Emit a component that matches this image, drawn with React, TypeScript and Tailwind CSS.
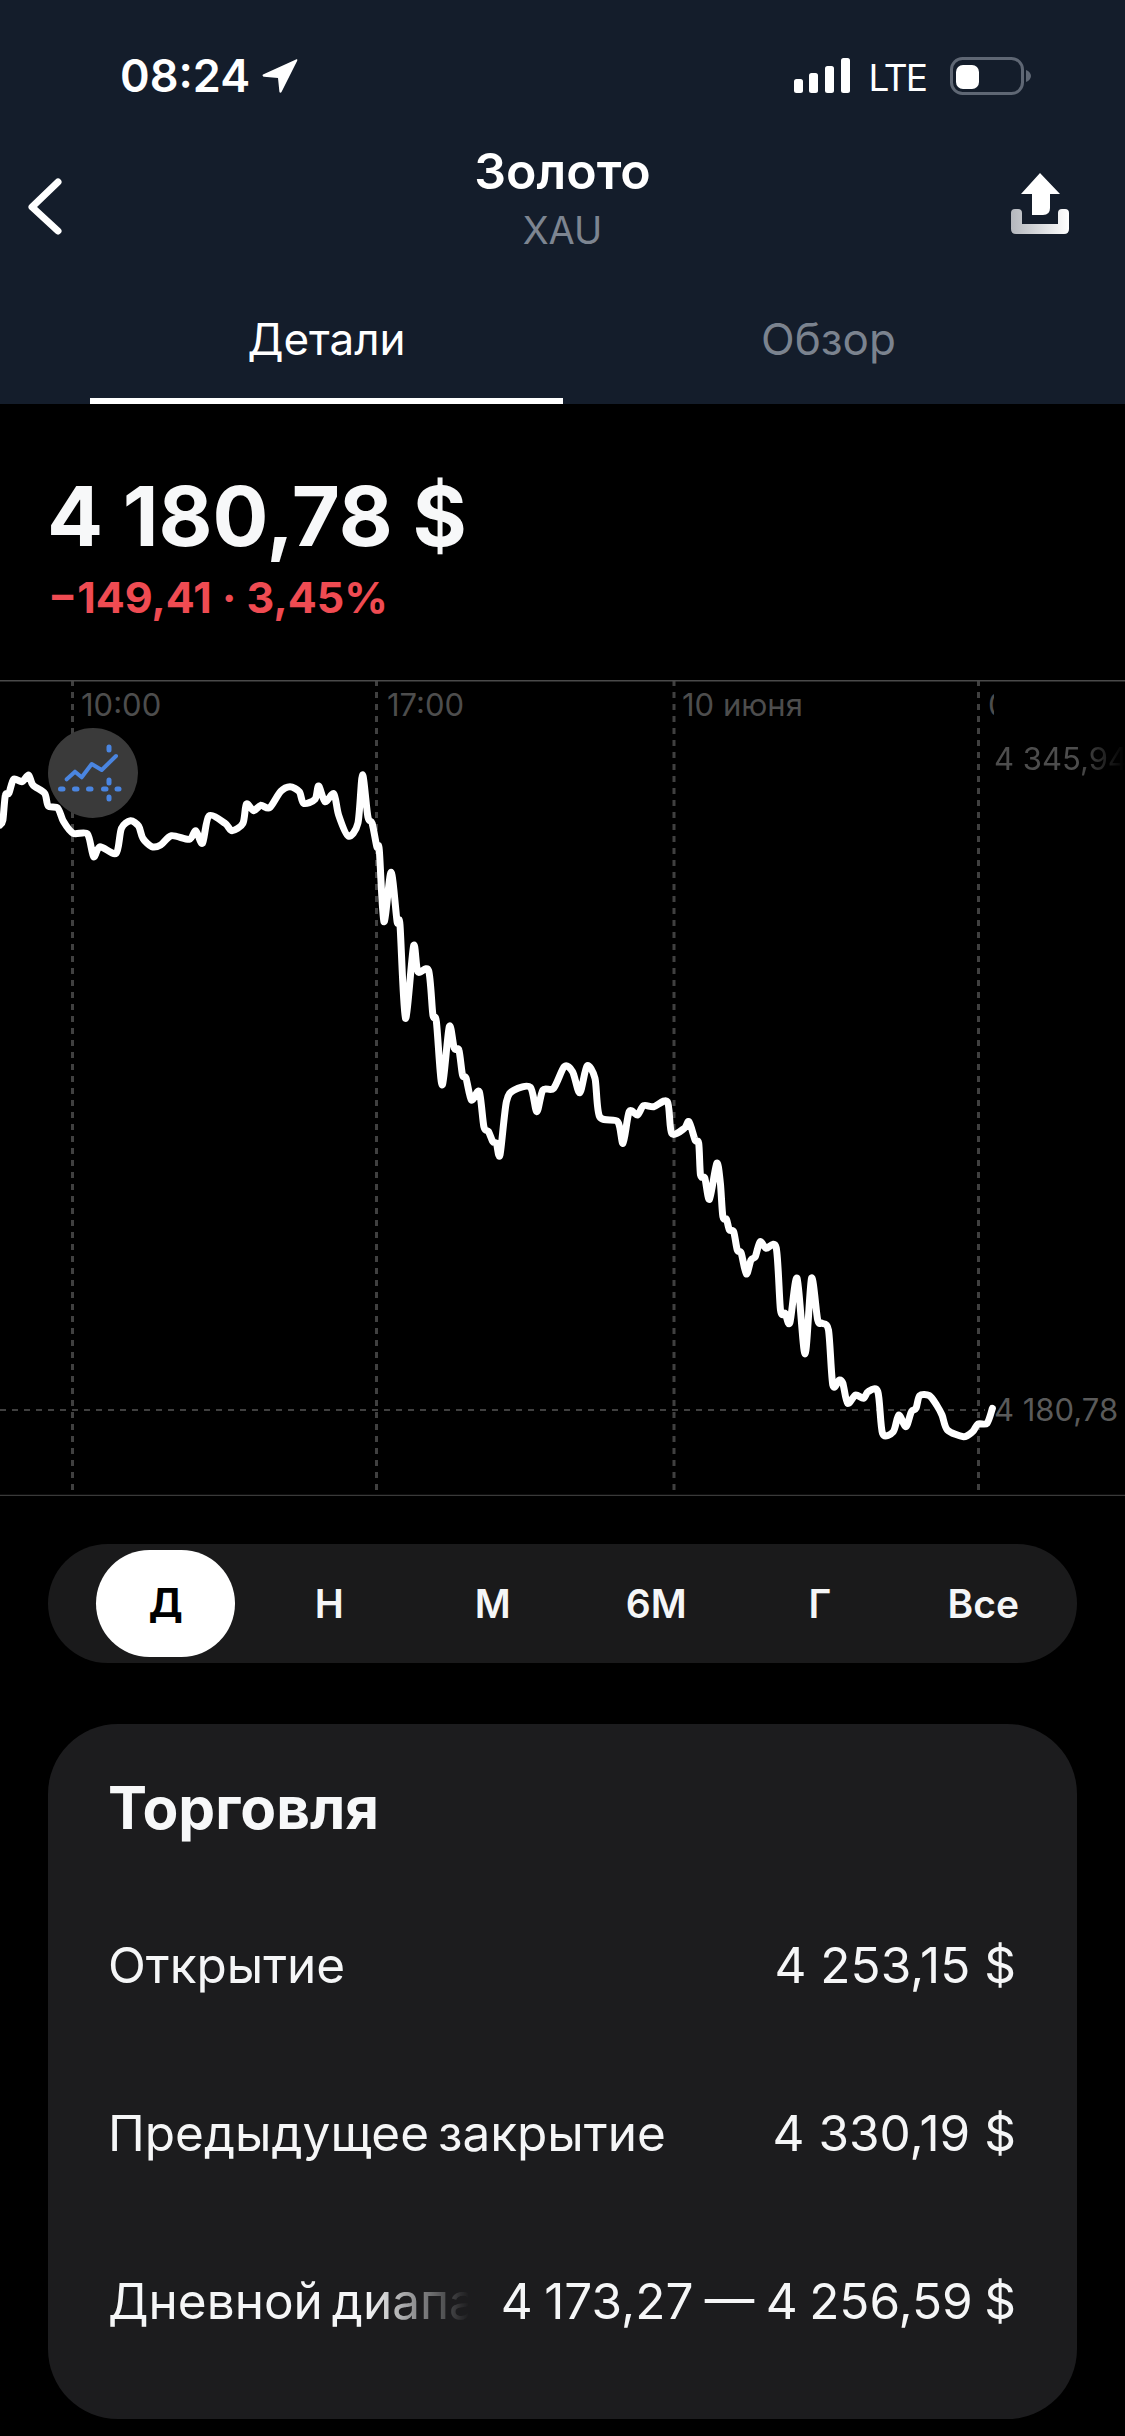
import React from "react";

const z2: [number, number][] = [[0,495],[8,480],[15,405],[25,400],[38,358],[62,365],[80,345],[92,375],[125,400],[135,438],[162,445],[178,485],[205,520],[245,522],[262,590],[280,560],[325,580],[340,505],[365,482],[388,498],[400,535],[425,560],[450,555],[480,527],[530,538],[548,512],[567,550],[585,468],[630,490],[650,512],[680,490],[690,432],[710,452],[730,436],[755,443],[785,395],[812,380],[838,395],[850,430],[882,418],[892,378],[910,425],[935,402],[948,465],[975,528],[1002,490],[1015,345],[1030,470],[1042,490],[1055,560],[1062,570],[1075,785],[1095,637],[1112,785],[1120,795],[1135,1075],[1158,858],[1170,935],[1200,932],[1212,1065],[1222,1085],[1238,1275],[1258,1100],[1272,1165],[1285,1170],[1295,1245],[1305,1255],[1320,1320],[1342,1295],[1355,1400],[1368,1415],[1380,1445],[1390,1450],[1400,1485],[1418,1325],[1440,1290],[1485,1282],[1503,1355],[1520,1290],[1550,1285]];
const z3: [number, number][] = [[12,1220],[35,1235],[55,1298],[75,1218],[97,1255],[110,1370],[160,1385],[175,1450],[192,1355],[215,1365],[232,1337],[260,1340],[298,1325],[310,1420],[345,1405],[358,1385],[375,1440]];
const z4: [number, number][] = [[385,130],[390,225],[402,235],[415,298],[435,190],[445,250],[452,350],[462,358],[470,390],[482,395],[492,450],[503,460],[517,522],[530,480],[542,470],[555,425],[572,445],[600,443],[612,630],[625,640],[638,668],[658,535],[680,762],[698,535],[715,660],[727,670],[745,690],[757,855],[775,840],[785,850],[798,910],[820,885],[842,895],[855,875],[882,875],[895,1000],[925,995],[940,945],[960,980],[975,935],[988,925],[998,887],[1025,887],[1045,915],[1060,945],[1075,990],[1120,1010],[1145,995],[1160,972],[1185,970],[1200,925]];

const points: [number, number][] = [
  ...z2.map(([x, y]): [number, number] => [x / 2.8, 660 + y / 3]),
  ...z3.map(([x, y]): [number, number] => [560 + x / 2.775, 660 + y / 3]),
  ...z4.map(([x, y]): [number, number] => [560 + x / 2.775, 1100 + y / 3]),
];

function smooth(p: [number, number][]) {
  let d = `M${p[0][0].toFixed(1)} ${p[0][1].toFixed(1)}`;
  for (let i = 0; i < p.length - 1; i++) {
    const a = p[Math.max(i - 1, 0)];
    const b = p[i];
    const c = p[i + 1];
    const e = p[Math.min(i + 2, p.length - 1)];
    const k = 0.14;
    d += `C${(b[0] + (c[0] - a[0]) * k).toFixed(1)} ${(b[1] + (c[1] - a[1]) * k).toFixed(1)} ${(c[0] - (e[0] - b[0]) * k).toFixed(1)} ${(c[1] - (e[1] - b[1]) * k).toFixed(1)} ${c[0].toFixed(1)} ${c[1].toFixed(1)}`;
  }
  return d;
}

const ranges = ["Д", "Н", "М", "6М", "Г", "Все"];

function Row({ label, value, fade }: { label: string; value: string; fade?: boolean }) {
  return (
    <div className="flex h-[168px] items-center justify-between text-[49.5px] leading-[56px] text-[#f5f6f7]">
      <span
        className={
          fade
            ? "w-[361px] shrink-0 overflow-hidden whitespace-nowrap [word-spacing:-5px] [mask-image:linear-gradient(to_right,black_72%,transparent_100%)]"
            : "whitespace-nowrap [word-spacing:-5px]"
        }
      >
        {label}
      </span>
      <span className={fade ? "whitespace-nowrap [word-spacing:-2.5px]" : "whitespace-nowrap"}>{value}</span>
    </div>
  );
}

export default function App() {
  return (
    <div className="h-[2436px] w-[1125px] overflow-hidden bg-black font-['Inter',sans-serif] text-white">
      <header className="flex h-[404px] flex-col bg-[#141d2b]">
        <div className="flex h-[145px] items-start justify-between pl-[120px] pr-[93px] pt-[51px]">
          <div className="flex items-center gap-[12px]">
            <span className="text-[45px] font-semibold leading-[50px]">08:24</span>
            <svg width="36" height="36" viewBox="0 0 36 36">
              <path d="M1 16.5 34 1.5c1-.4 1.6.2 1.2 1.2L19.5 34c-.6 1.2-1.9 1-2.1-.3L16 20 2 18.8c-1.4-.2-1.9-1.7-1-2.3Z" fill="#fff" />
            </svg>
          </div>
          <div className="flex items-start">
            <svg width="56" height="36" viewBox="0 0 56 36" className="mt-[7px]">
              <rect x="0" y="21" width="9" height="14" rx="2.5" fill="#fff" />
              <rect x="15" y="15" width="9" height="20" rx="2.5" fill="#fff" />
              <rect x="31" y="8" width="9" height="27" rx="2.5" fill="#fff" />
              <rect x="47" y="0" width="9" height="35" rx="2.5" fill="#fff" />
            </svg>
            <span className="ml-[19px] mt-[2px] text-[37px] font-normal leading-[50px] tracking-[-2px]">LTE</span>
            <svg width="82" height="38" viewBox="0 0 82 38" className="ml-[24px] mt-[6px]">
              <rect x="1.5" y="1.5" width="71" height="35" rx="11" fill="none" stroke="#5f6774" strokeWidth="3" />
              <rect x="6" y="8" width="23" height="24" rx="7" fill="#fff" />
              <path d="M76 13c3 1 5 3.5 5 6s-2 5-5 6Z" fill="#5f6774" />
            </svg>
          </div>
        </div>
        <div className="relative flex h-[108px] flex-col items-center">
          <svg width="36" height="58" viewBox="0 0 36 58" className="absolute left-[27px] top-[33px]">
            <path d="M31 4 5 29l26 24" fill="none" stroke="#fff" strokeWidth="7" strokeLinecap="round" strokeLinejoin="round" />
          </svg>
          <span className="text-[50px] font-semibold leading-[52px]">Золото</span>
          <span className="mt-[10px] text-[38px] leading-[46px] text-[#7d8591]">XAU</span>
          <svg width="60" height="62" viewBox="0 0 60 62" className="absolute left-[1010px] top-[28px]">
            <defs>
              <linearGradient id="tray" x1="0" x2="1" y1="0" y2="0">
                <stop offset="0" stopColor="#b4b7bd" />
                <stop offset="1" stopColor="#ffffff" />
              </linearGradient>
            </defs>
            <path d="M30 0 50 21H40v14q0 7-7 7H22V21H11Z" fill="#fff" />
            <path d="M1 40q0-4 4-4h3q4 0 4 4v11h36V40q0-4 4-4h3q4 0 4 4v16q0 5-5 5H6q-5 0-5-5Z" fill="url(#tray)" />
          </svg>
        </div>
        <div className="grid flex-1 grid-cols-[473px_531px] pl-[90px]">
          <div className="flex items-start justify-center border-b-[6px] border-white pt-[61px]">
            <span className="text-[44px] leading-[50px]">Детали</span>
          </div>
          <div className="flex items-start justify-center pt-[61px]">
            <span className="text-[44px] leading-[50px] text-[#7b838f]">Обзор</span>
          </div>
        </div>
      </header>

      <section className="flex h-[276px] flex-col pl-[47px] pt-[70px]">
        <div className="text-[83px] font-bold leading-[84px] text-[#f7f8f9]">4 180,78 $</div>
        <div className="ml-[1px] mt-[15px] text-[43px] font-bold leading-[48px] text-[#ef4b52]">−149,41 · 3,45%</div>
      </section>

      <section className="relative h-[816px]">
        <svg className="absolute inset-0" width="1125" height="816" viewBox="0 680 1125 816">
          <g stroke="#404040" strokeWidth="3" strokeDasharray="6 6">
            <line x1="72.5" y1="680" x2="72.5" y2="1490" />
            <line x1="376.5" y1="680" x2="376.5" y2="1490" />
            <line x1="674" y1="680" x2="674" y2="1490" />
            <line x1="978.5" y1="680" x2="978.5" y2="1490" />
            <line x1="0" y1="1410" x2="985" y2="1410" strokeWidth="2" />
          </g>
          <line x1="0" y1="680.5" x2="1125" y2="680.5" stroke="#4a4a4a" strokeWidth="2" />
          <line x1="0" y1="1495.5" x2="1125" y2="1495.5" stroke="#3a3a3a" strokeWidth="1.5" />
        </svg>

        <span className="absolute left-[81px] top-[7px] text-[31px] leading-[36px] text-[#4d4d4d]">10:00</span>
        <span className="absolute left-[387px] top-[7px] text-[31px] leading-[36px] text-[#4d4d4d]">17:00</span>
        <span className="absolute left-[682px] top-[7px] text-[31px] leading-[36px] text-[#4d4d4d]">10 июня</span>
        <span className="absolute left-[988px] top-[7px] w-[6px] overflow-hidden text-[31px] leading-[36px] text-[#4d4d4d]">0</span>
        <span className="absolute left-[994px] top-[61px] w-[131px] overflow-hidden whitespace-nowrap text-[31px] leading-[36px] text-[#4d4d4d] [mask-image:linear-gradient(to_right,black_65%,transparent_100%)]">4 345,94</span>
        <span className="absolute left-[994px] top-[712px] whitespace-nowrap text-[31px] leading-[36px] text-[#5a5a5a]">4 180,78</span>

        <div className="absolute left-[48px] top-[48px] flex h-[90px] w-[90px] items-center justify-center rounded-full bg-[#3a3a3a]">
          <svg width="90" height="90" viewBox="8 8 90 90">
            <path d="M26.7 59.3 35 51.7l6.7 5.6 10-13.3 10 6L76 36" fill="none" stroke="#4a85e0" strokeWidth="4" strokeLinecap="round" strokeLinejoin="round" />
            <g stroke="#4a85e0" strokeWidth="5" strokeLinecap="round">
              <line x1="20.5" y1="69" x2="23" y2="69" />
              <line x1="34.5" y1="69" x2="37" y2="69" />
              <line x1="48.5" y1="69" x2="51" y2="69" />
              <line x1="63.5" y1="69" x2="66" y2="69" />
              <line x1="77" y1="69" x2="79" y2="69" />
              <line x1="69" y1="27" x2="69" y2="30" />
              <line x1="69" y1="60" x2="69" y2="63" />
              <line x1="69" y1="77" x2="69" y2="79" />
            </g>
          </svg>
        </div>

        <svg className="absolute inset-0" width="1125" height="816" viewBox="0 680 1125 816">
          <path d={smooth(points)} fill="none" stroke="#fff" strokeWidth="7" strokeLinecap="round" strokeLinejoin="round" />
        </svg>
      </section>

      <nav className="mx-[48px] mt-[48px] grid h-[119px] grid-cols-6 rounded-[60px] bg-[#1a1a1b] pl-[36px] pr-[12px] text-[39px] font-semibold">
        {ranges.map((r, i) => (
          <div key={r} className="flex items-center justify-center">
            <span
              className={
                i === 0
                  ? "flex h-[107px] w-[139px] items-center justify-center rounded-[54px] bg-white font-bold text-black"
                  : "pt-[2px] text-[#f5f6f7]"
              }
            >
              {r}
            </span>
          </div>
        ))}
      </nav>

      <section className="mx-[48px] mt-[61px] h-[695px] rounded-[70px] bg-[#1c1c1e] pl-[60px] pr-[61px] pt-[56px]">
        <h2 className="text-[58.5px] font-bold leading-[56px] text-[#f7f8f9]">Торговля</h2>
        <div className="mt-[45px]">
          <Row label="Открытие" value="4 253,15 $" />
          <Row label="Предыдущее закрытие" value="4 330,19 $" />
          <Row label="Дневной диапазон" value="4 173,27 — 4 256,59 $" fade />
        </div>
      </section>
    </div>
  );
}
